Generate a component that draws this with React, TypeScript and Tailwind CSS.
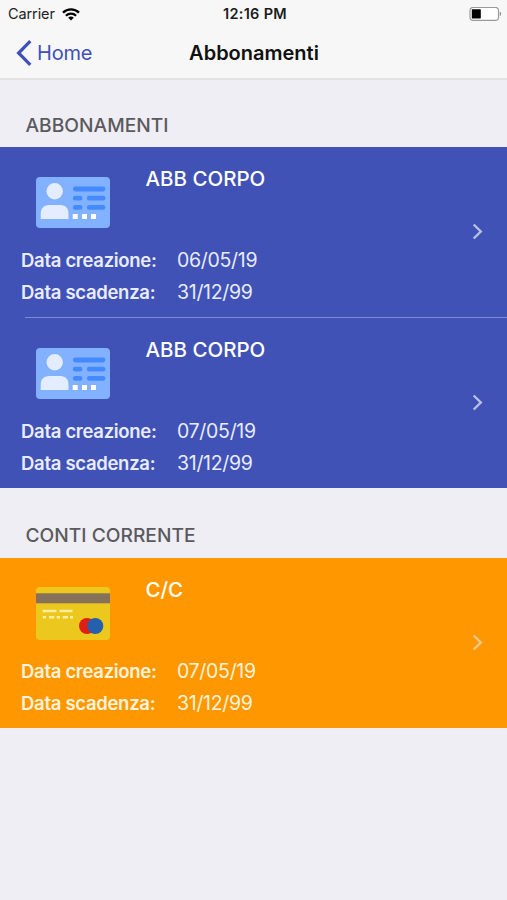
type Entry = {
  title: string;
  created: string;
  expires: string;
};

type Variant = "subscription" | "account";

const subscriptions: Entry[] = [
  { title: "ABB CORPO", created: "06/05/19", expires: "31/12/99" },
  { title: "ABB CORPO", created: "07/05/19", expires: "31/12/99" },
];

const accounts: Entry[] = [
  { title: "C/C", created: "07/05/19", expires: "31/12/99" },
];

function WifiIcon() {
  return (
    <svg width="18" height="13" viewBox="0 0 18 13" fill="none" stroke="#000" strokeWidth="2.3">
      <path d="M1 4.6C5.4 0.2 12.6 0.2 17 4.6" />
      <path d="M3.9 7.8C6.7 5 11.3 5 14.1 7.8" />
      <path d="M6.2 9.7C7.8 8.2 10.2 8.2 11.8 9.7L9 12.5Z" fill="#000" stroke="none" />
    </svg>
  );
}

function BatteryIcon() {
  return (
    <svg width="33" height="15" viewBox="0 0 33 15">
      <rect x="1" y="0.4" width="28.5" height="13" rx="3.2" fill="#fff" stroke="#9a9a9c" strokeWidth="1.2" />
      <rect x="2.8" y="2.2" width="9" height="9.2" rx="0.6" fill="#000" />
      <path d="M30.8 4.7C32.6 5.3 32.6 8.5 30.8 9.1Z" fill="#8e8e90" />
    </svg>
  );
}

function IdCardIcon() {
  return (
    <svg width="74" height="51" viewBox="0 0 74 51">
      <rect width="74" height="51" rx="4" fill="#82b1ff" />
      <circle cx="18.7" cy="14.3" r="8.2" fill="#e3edff" />
      <path d="M4.7 42V36.5C4.7 31.5 8 28 13 28H24.5C29.5 28 32.5 31.5 32.5 36.5V42Z" fill="#e3edff" />
      <g stroke="#448aff" strokeWidth="4.8" strokeLinecap="round">
        <path d="M39.3 12H67" />
        <path d="M39.3 21.2H44" />
        <path d="M53.3 21.2H67" />
        <path d="M39.3 30.4H44" />
        <path d="M53.3 30.4H67" />
      </g>
      <g fill="#fff">
        <rect x="36.7" y="37" width="5" height="5" />
        <rect x="46" y="37" width="5" height="5" />
        <rect x="55" y="37" width="5" height="5" />
      </g>
    </svg>
  );
}

function CreditCardIcon() {
  return (
    <svg width="74" height="53" viewBox="0 0 74 53">
      <rect width="74" height="53" rx="4" fill="#ecc71d" />
      <rect y="6.3" width="74" height="10" fill="#86725a" />
      <g stroke="#fcefa0" strokeWidth="2.4">
        <path d="M6.7 24H20.5M23.5 24H36.5" />
        <path d="M6.7 30.3H10M13 30.3H18.3M20.7 30.3H24M26.8 30.3H32M34 30.3H37" />
      </g>
      <circle cx="51" cy="39" r="8" fill="#e01f14" />
      <circle cx="59.3" cy="39" r="8" fill="#2560ad" />
    </svg>
  );
}

function Field({ label, value }: { label: string; value: string }) {
  return (
    <div className="flex h-8 items-center whitespace-nowrap">
      <dt className="w-[156px] text-[18.5px] font-semibold tracking-[-0.3px]">{label}</dt>
      <dd className="text-[19.5px] tracking-[-0.3px]">{value}</dd>
    </div>
  );
}

function EntryRow({ entry, variant }: { entry: Entry; variant: Variant }) {
  const isAccount = variant === "account";

  return (
    <li className="flex h-[170px] items-center justify-between">
      <div className="flex h-full flex-col pl-[21px]">
        <div className="flex h-[98px] pl-[15px]">
          <div className={isAccount ? "w-[109.5px] pt-[29px]" : "w-[109.5px] pt-[30px]"}>
            {isAccount ? <CreditCardIcon /> : <IdCardIcon />}
          </div>
          <h3 className="pt-[18px] text-[20.5px] leading-7 font-medium text-white">{entry.title}</h3>
        </div>
        <dl className={isAccount ? "text-[#fff3dc]" : "text-[#e9ecff]"}>
          <Field label="Data creazione:" value={entry.created} />
          <Field label="Data scadenza:" value={entry.expires} />
        </dl>
      </div>
      <svg
        className={isAccount ? "mr-6 mb-[2px] text-[#ecc88c]" : "mr-6 mb-[2px] text-[#b9c0e6]"}
        width="11"
        height="17"
        viewBox="0 0 11 17"
        fill="none"
        stroke="currentColor"
        strokeWidth="2.4"
      >
        <path d="M1.7 1.5L8.8 8.5L1.7 15.5" />
      </svg>
    </li>
  );
}

function SectionTitle({ children }: { children: string }) {
  return (
    <h2 className="pl-[25.5px] text-[19.2px] leading-6 font-medium text-[#5a5a5e]">{children}</h2>
  );
}

export default function App() {
  return (
    <div className="h-[900px] w-[507px] overflow-hidden bg-[#efeef4] font-['Inter',sans-serif]">
      {/* Status bar and navigation */}
      <header className="h-20 border-b-2 border-[#e2e2e5] bg-[#f7f7f8]">
        <div className="grid h-7 grid-cols-3 items-center pr-[5px] pl-2 text-black">
          <div className="flex items-center gap-[7px]">
            <span className="text-[14.5px] tracking-[-0.1px] text-[#222]">Carrier</span>
            <WifiIcon />
          </div>
          <span className="text-center text-[14.5px] font-semibold tracking-[0.3px] whitespace-nowrap text-[#1c1c1c]">
            12:16 PM
          </span>
          <div className="flex justify-end">
            <BatteryIcon />
          </div>
        </div>
        <nav className="grid h-[49px] grid-cols-3 items-center pr-[15px] pl-4">
          <a href="#" className="flex items-center gap-[5px] text-[#3f51b5]">
            <svg width="16" height="26" viewBox="0 0 16 26" fill="none" stroke="currentColor" strokeWidth="3.2">
              <path d="M14.3 1.2L2.6 13L14.3 24.8" />
            </svg>
            <span className="text-[20px] tracking-[-0.2px]">Home</span>
          </a>
          <h1 className="text-center text-[20px] font-semibold text-[#111]">Abbonamenti</h1>
        </nav>
      </header>

      <main>
        <section>
          <div className="h-[67px] pt-[33px]">
            <SectionTitle>ABBONAMENTI</SectionTitle>
          </div>
          <ul className="h-[341px] bg-[#4052b5]">
            <EntryRow entry={subscriptions[0]} variant="subscription" />
            <li className="ml-[25px] h-px bg-[#7f8bd0]" />
            <EntryRow entry={subscriptions[1]} variant="subscription" />
          </ul>
        </section>

        <section>
          <div className="h-[70px] pt-[35px]">
            <SectionTitle>CONTI CORRENTE</SectionTitle>
          </div>
          <ul className="bg-[#ff9800]">
            {accounts.map((entry) => (
              <EntryRow key={entry.title} entry={entry} variant="account" />
            ))}
          </ul>
        </section>
      </main>
    </div>
  );
}
